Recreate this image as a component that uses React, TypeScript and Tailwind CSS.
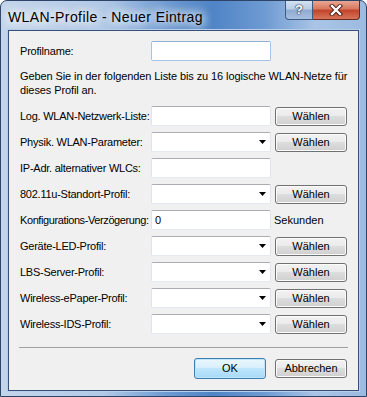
import React from "react";

const font = "font-['Liberation_Sans',Arial,sans-serif]";

function TextBox({ value, focus }: { value?: string; focus?: boolean }) {
  return (
    <div
      className={
        "flex h-[20px] w-[120px] items-center rounded-[2px] border bg-white pl-[3px] text-[11px] text-black " +
        (focus
          ? "border-[#a4c3e6] border-t-[#8fb2dc]"
          : "border-[#e2e3ea] border-t-[#abadb3] border-b-[#e3e9ef]")
      }
    >
      {value}
    </div>
  );
}

function Combo() {
  return (
    <div className="flex h-[20px] w-[120px] items-center justify-end rounded-[2px] border border-[#e2e3ea] border-t-[#abadb3] border-b-[#e3e9ef] bg-white pr-[4px]">
      <svg width="7" height="4" viewBox="0 0 7 4">
        <path d="M0 0h7L3.5 4z" fill="#000" />
      </svg>
    </div>
  );
}

function Btn({ children, primary }: { children: React.ReactNode; primary?: boolean }) {
  return (
    <div
      className={
        "flex w-[72px] items-center justify-center rounded-[3px] border text-[11px] text-black " +
        (primary
          ? "h-[21px] border-[#3c7fb1] bg-[linear-gradient(#eaf6fd_0%,#d9f0fc_45%,#bee6fd_50%,#a7d9f5_100%)] shadow-[inset_0_0_0_1px_#c0e3f7]"
          : "h-[19px] border-[#707070] bg-[linear-gradient(#f2f2f2_0%,#ebebeb_45%,#dddddd_50%,#cfcfcf_100%)] shadow-[inset_0_0_0_1px_#fcfcfc]")
      }
    >
      {children}
    </div>
  );
}

type Row = { label: string; kind: "text" | "combo"; btn?: boolean; value?: string; suffix?: string; tight?: boolean };

const rows: Row[] = [
  { label: "Log. WLAN-Netzwerk-Liste:", kind: "text", btn: true },
  { label: "Physik. WLAN-Parameter:", kind: "combo", btn: true },
  { label: "IP-Adr. alternativer WLCs:", kind: "text" },
  { label: "802.11u-Standort-Profil:", kind: "combo", btn: true },
  { label: "Konfigurations-Verzögerung:", kind: "text", value: "0", suffix: "Sekunden", tight: true },
  { label: "Geräte-LED-Profil:", kind: "combo", btn: true },
  { label: "LBS-Server-Profil:", kind: "combo", btn: true },
  { label: "Wireless-ePaper-Profil:", kind: "combo", btn: true },
  { label: "Wireless-IDS-Profil:", kind: "combo", btn: true },
];

export default function App() {
  return (
    <div className={"h-[397px] w-[367px] overflow-hidden " + font}>
      <div className="flex h-full w-full flex-col rounded-t-[7px] border border-[#2e4466] bg-[linear-gradient(90deg,#c3d5eb_0%,#b2c9e6_28%,#6e9bd2_45%,#4f84c6_58%,#6d9ad2_72%,#a9c4e6_86%,#9cbbe0_100%)]">
        {/* title bar */}
        <div className="flex h-[28px] shrink-0 items-start">
          <div className="mt-[6px] pl-[7px] text-[14px] tracking-[0.4px] text-black [text-shadow:0_0_8px_#fff,0_0_12px_#fff,0_0_14px_#fff]">
            WLAN-Profile - Neuer Eintrag
          </div>
          <div className="ml-auto mr-[6px] flex h-[19px]">
            <div className="flex w-[28px] items-center justify-center rounded-bl-[4px] border border-t-0 border-[#3c5a82] bg-[linear-gradient(#d4e1f1_0%,#b8cce6_45%,#8eaad0_50%,#a6c0e0_100%)] text-[13px] font-bold text-white [text-shadow:0_0_1px_#243a5a,0_0_1px_#243a5a,0_0_2px_#243a5a]">
              ?
            </div>
            <div className="flex w-[47px] items-center justify-center rounded-br-[4px] border border-l-0 border-t-0 border-[#6a2a1e] bg-[linear-gradient(#e7a693_0%,#d7785e_45%,#c3422a_50%,#d5755a_100%)]">
              <svg width="14" height="12" viewBox="0 0 14 12">
                <path d="M3 2l8 8M11 2l-8 8" stroke="#4a1a12" strokeWidth="4.2" strokeLinecap="square" />
                <path d="M3 2l8 8M11 2l-8 8" stroke="#fff" strokeWidth="2.4" strokeLinecap="square" />
              </svg>
            </div>
          </div>
        </div>
        {/* client area */}
        <div className="mx-[7px] mt-[1px] flex h-[361px] flex-col border border-[#37507a] bg-[#f0f0f0] pl-[11px] pt-[10px] text-[11px] text-black shadow-[0_0_0_1px_#b9cde8]">
          <div className="grid grid-cols-[131px_120px] items-center">
            <div className="tracking-[-0.2px]">Profilname:</div>
            <TextBox focus />
          </div>
          <p className="mt-[8px] w-[335px] leading-[14px] tracking-[-0.1px]">
            Geben Sie in der folgenden Liste bis zu 16 logische WLAN-Netze für dieses Profil an.
          </p>
          <div className="mt-[9px] flex flex-col gap-[6px]">
            {rows.map((r) => (
              <div key={r.label} className="grid grid-cols-[131px_120px_76px] items-center">
                <div className={"whitespace-nowrap " + (r.tight ? "tracking-[-0.4px]" : "tracking-[-0.25px]")}>
                  {r.label}
                </div>
                {r.kind === "text" ? <TextBox value={r.value} /> : <Combo />}
                <div className="pl-[4px]">
                  {r.btn ? <Btn>Wählen</Btn> : r.suffix ? <div className="-ml-[1px]">{r.suffix}</div> : null}
                </div>
              </div>
            ))}
          </div>
          <div className="-ml-[1px] mt-[13px] h-[2px] w-[329px] border-t border-[#a0a0a0] border-b-white" />
          <div className="mt-[9px] flex w-[327px] justify-end gap-[9px]">
            <Btn primary>OK</Btn>
            <div className="flex h-[21px] items-center">
              <Btn>Abbrechen</Btn>
            </div>
          </div>
        </div>
      </div>
    </div>
  );
}
